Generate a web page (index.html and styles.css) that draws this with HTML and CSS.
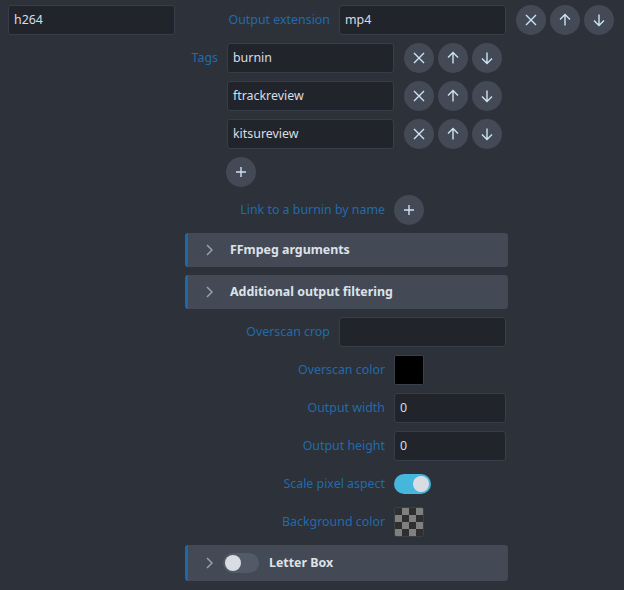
FILE: index.html
```html
<!DOCTYPE html>
<html>
<head>
<meta charset="utf-8">
<link rel="stylesheet" href="styles.css">
</head>
<body>
<div class="page">
  <div class="row">
    <div class="input first">h264</div>
    <div class="label lab-ext">Output extension</div>
    <div class="input">mp4</div>
    <div class="btns">
      <span class="btn"><svg viewBox="0 0 30 30"><path d="M10 10 L20 20 M20 10 L10 20"/></svg></span>
      <span class="btn"><svg viewBox="0 0 30 30"><path d="M15 9.5 V20.5 M10 14.5 L15 9.5 L20 14.5"/></svg></span>
      <span class="btn"><svg viewBox="0 0 30 30"><path d="M15 9.5 V20.5 M10 15.5 L15 20.5 L20 15.5"/></svg></span>
    </div>
  </div>
  <div class="row">
    <div class="label lab-tags">Tags</div>
    <div class="input">burnin</div>
    <div class="btns">
      <span class="btn"><svg viewBox="0 0 30 30"><path d="M10 10 L20 20 M20 10 L10 20"/></svg></span>
      <span class="btn"><svg viewBox="0 0 30 30"><path d="M15 9.5 V20.5 M10 14.5 L15 9.5 L20 14.5"/></svg></span>
      <span class="btn"><svg viewBox="0 0 30 30"><path d="M15 9.5 V20.5 M10 15.5 L15 20.5 L20 15.5"/></svg></span>
    </div>
  </div>
  <div class="row">
    <div class="label lab-tags"></div>
    <div class="input">ftrackreview</div>
    <div class="btns">
      <span class="btn"><svg viewBox="0 0 30 30"><path d="M10 10 L20 20 M20 10 L10 20"/></svg></span>
      <span class="btn"><svg viewBox="0 0 30 30"><path d="M15 9.5 V20.5 M10 14.5 L15 9.5 L20 14.5"/></svg></span>
      <span class="btn"><svg viewBox="0 0 30 30"><path d="M15 9.5 V20.5 M10 15.5 L15 20.5 L20 15.5"/></svg></span>
    </div>
  </div>
  <div class="row">
    <div class="label lab-tags"></div>
    <div class="input">kitsureview</div>
    <div class="btns">
      <span class="btn"><svg viewBox="0 0 30 30"><path d="M10 10 L20 20 M20 10 L10 20"/></svg></span>
      <span class="btn"><svg viewBox="0 0 30 30"><path d="M15 9.5 V20.5 M10 14.5 L15 9.5 L20 14.5"/></svg></span>
      <span class="btn"><svg viewBox="0 0 30 30"><path d="M15 9.5 V20.5 M10 15.5 L15 20.5 L20 15.5"/></svg></span>
    </div>
  </div>
  <div class="row">
    <span class="btn add-tag"><svg viewBox="0 0 30 30"><path d="M15 10 V20 M10 15 H20"/></svg></span>
  </div>
  <div class="row">
    <div class="label lab-wide">Link to a burnin by name</div>
    <span class="btn"><svg viewBox="0 0 30 30"><path d="M15 10 V20 M10 15 H20"/></svg></span>
  </div>
  <div class="panel">
    <svg class="chev" viewBox="0 0 7 12"><path d="M1 1 L6 6 L1 11"/></svg>
    <span class="panel-title">FFmpeg arguments</span>
  </div>
  <div class="panel">
    <svg class="chev" viewBox="0 0 7 12"><path d="M1 1 L6 6 L1 11"/></svg>
    <span class="panel-title">Additional output filtering</span>
  </div>
  <div class="row">
    <div class="label lab-ext2">Overscan crop</div>
    <div class="input"></div>
  </div>
  <div class="row">
    <div class="label lab-wide">Overscan color</div>
    <div class="swatch black"></div>
  </div>
  <div class="row">
    <div class="label lab-wide">Output width</div>
    <div class="input short">0</div>
  </div>
  <div class="row">
    <div class="label lab-wide">Output height</div>
    <div class="input short">0</div>
  </div>
  <div class="row">
    <div class="label lab-wide">Scale pixel aspect</div>
    <div class="toggle on"><span class="knob"></span></div>
  </div>
  <div class="row">
    <div class="label lab-wide">Background color</div>
    <div class="swatch checker"></div>
  </div>
  <div class="panel tall">
    <svg class="chev" viewBox="0 0 7 12"><path d="M1 1 L6 6 L1 11"/></svg>
    <div class="toggle off"><span class="knob"></span></div>
    <span class="panel-title">Letter Box</span>
  </div>
</div>
</body>
</html>
```

FILE: styles.css
```css
html, body {
  margin: 0;
  background: #2c313a;
}
body {
  font-family: "Noto Sans", sans-serif;
  font-size: 12.4px;
  color: #d3d8de;
}
.page {
  display: flex;
  flex-direction: column;
  gap: 8px;
  padding-top: 5px;
}
.row {
  display: flex;
  align-items: center;
  height: 30px;
}
.label {
  flex: none;
  text-align: right;
  color: #226bab;
  margin-right: 9px;
  box-sizing: border-box;
  white-space: nowrap;
  line-height: 28px;
}
.lab-ext { width: 155px; }
.lab-ext2 { width: 330px; }
.lab-tags { width: 218px; }
.lab-wide { width: 385px; }
.input {
  flex: none;
  box-sizing: border-box;
  width: 167px;
  height: 30px;
  line-height: 27px;
  padding-left: 5px;
  background: #21252b;
  border: 1px solid #383e49;
  border-radius: 3px;
  color: #d8dde3;
}
.input.first { margin-left: 8px; }
.input.short { width: 112px; }
.btns {
  display: flex;
  gap: 4px;
  margin-left: 10px;
}
.btn {
  flex: none;
  display: block;
  width: 30px;
  height: 30px;
  border-radius: 50%;
  background: #434a56;
}
.btn svg {
  display: block;
  width: 30px;
  height: 30px;
  fill: none;
  stroke: #cfe2f3;
  stroke-width: 1.4;
}
.add-tag { margin-left: 226px; }
.panel {
  margin-left: 185px;
  width: 323px;
  height: 34px;
  box-sizing: border-box;
  background: #434a56;
  border-left: 3px solid #1b6aa7;
  border-radius: 3px;
  display: flex;
  align-items: center;
  padding-left: 18px;
}
.panel.tall { height: 36px; }
.chev {
  flex: none;
  width: 7px;
  height: 12px;
  fill: none;
  stroke: #98a1ac;
  stroke-width: 1.5;
  margin-right: 17px;
}
.panel.tall .chev { margin-right: 10px; }
.panel-title {
  font-weight: bold;
  color: #dde2e8;
  line-height: 30px;
}
.panel.tall .panel-title { margin-left: 10px; }
.swatch {
  flex: none;
  width: 30px;
  height: 30px;
  box-sizing: border-box;
  border: 1px solid #3a404a;
  border-radius: 2px;
}
.swatch.black { background: #000; }
.swatch.checker {
  background-color: #2f2f2f;
  background-image: conic-gradient(#808080 0 25%, #2f2f2f 0 50%, #808080 0 75%, #2f2f2f 0);
  background-size: 14px 14px;
  background-position: 0 0;
}
.toggle {
  flex: none;
  position: relative;
  width: 37px;
  height: 20px;
  border-radius: 10px;
}
.toggle.on { background: #47b6dc; }
.toggle.off { background: #525a67; width: 36px; }
.knob {
  position: absolute;
  top: 2px;
  width: 16px;
  height: 16px;
  border-radius: 50%;
  background: #d9dde3;
}
.toggle.on .knob { right: 2px; }
.toggle.off .knob { left: 2px; }
```
